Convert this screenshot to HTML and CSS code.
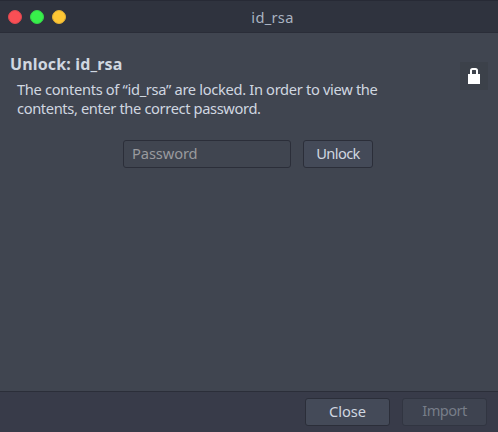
FILE: index.html
```html
<!DOCTYPE html>
<html lang="en">
<head>
<meta charset="utf-8">
<title>id_rsa</title>
<link rel="stylesheet" href="styles.css">
</head>
<body>
<div class="window">
  <header class="titlebar">
    <div class="controls"><span class="dot close"></span><span class="dot maximize"></span><span class="dot minimize"></span></div>
    <div class="title">id_rsa</div>
  </header>
  <main class="content">
    <div class="intro">
      <div class="text">
        <h1>Unlock: id_rsa</h1>
        <p><span class="first">The contents of “id_rsa” are locked. In order to view the</span><br><span class="second">contents, enter the correct password.</span></p>
      </div>
      <div class="badge">
        <svg width="28" height="28" viewBox="0 0 28 28"><path d="M11 13V8.5Q11 7 12.5 7H15.5Q17 7 17 8.5V13" fill="none" stroke="#fff" stroke-width="2"/><path d="M8 12h12v10H8z" fill="#fff"/></svg>
      </div>
    </div>
    <form class="unlock">
      <input class="password" type="password" placeholder="Password">
      <button class="button" type="button">Unlock</button>
    </form>
  </main>
  <footer class="actions">
    <button class="button wide" type="button">Close</button>
    <button class="button wide" type="button" disabled>Import</button>
  </footer>
</div>
</body>
</html>
```
FILE: styles.css
```css
* { box-sizing: border-box; }
body { margin: 0; background: #404552; color: #d0d7e0; font: 14.67px/19px "Noto Sans", sans-serif; }
.window { width: 498px; height: 432px; display: flex; flex-direction: column; background: #404550; }
.titlebar { height: 33px; background: #2f333e; border-top: 1px solid #272a35; border-bottom: 1px solid #2a2d38; display: grid; grid-template-columns: 80px 1fr 33px; align-items: center; }
.controls { display: flex; gap: 8px; padding-left: 8px; }
.dot { width: 14px; height: 14px; border-radius: 50%; border: 1px solid; }
.close { background: #f94f55; border-color: #dc4850; }
.maximize { background: #38ef4b; border-color: #34d548; }
.minimize { background: #fdc634; border-color: #dfae36; }
.title { padding-top: 2px; text-align: center; letter-spacing: .3px; color: #aab3c1; }
.content { flex: 1; padding: 21px 10px 0; }
.intro { display: flex; justify-content: space-between; }
h1 { margin: 0 0 6px; font-size: 16px; line-height: 20px; letter-spacing: .15px; }
p { margin: 0 0 1px 7px; white-space: nowrap; }
.first { letter-spacing: -.32px; }
.second { letter-spacing: -.37px; }
.badge { margin-top: 8px; width: 28px; height: 28px; background: #3c414a; }
.badge svg { display: block; }
.unlock { display: flex; gap: 12px; margin: 21px 0 0 113px; }
.button, .password { height: 28px; border: 1px solid #2b2e39; border-radius: 3px; background: #444a58; color: #d0d7e0; font: inherit; padding: 0 0 2px; }
.password { width: 168px; padding: 0 8px 2px; background: #404550; }
.password::placeholder { color: #999a9e; letter-spacing: -.1px; }
.unlock .button { width: 70px; letter-spacing: -.6px; }
.actions { height: 41px; border-top: 1px solid #2b2e39; background: #383b49; display: flex; justify-content: flex-end; gap: 12px; padding: 6px 11px 0; }
.wide { width: 85px; }
.button:disabled { color: #777d88; background: #3e4350; border-color: #313541; padding-bottom: 4px; letter-spacing: -.6px; }
```
